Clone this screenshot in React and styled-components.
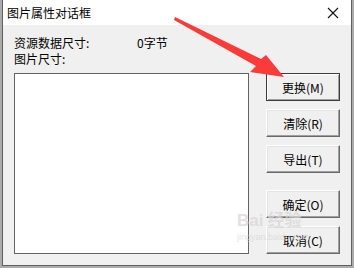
import styled, { createGlobalStyle } from 'styled-components';

const GlobalStyle = createGlobalStyle`
	html, body {
		margin: 0;
		padding: 0;
		background: #ababab;
	}
	* {
		box-sizing: border-box;
	}
`;

const buttons = [
	{ label: '更换(M)', primary: true },
	{ label: '清除(R)' },
	{ label: '导出(T)' },
];

const bottomButtons = [{ label: '确定(O)' }, { label: '取消(C)' }];

function App() {
	return (
		<>
			<GlobalStyle />
			<Screen>
				<Window>
					<TitleBar>
						<Title>图片属性对话框</Title>
						<CloseButton>
							<svg width="12" height="12" viewBox="0 0 12 12">
								<path d="M1 1 L11 11 M11 1 L1 11" stroke="#111" strokeWidth="1.1" />
							</svg>
						</CloseButton>
					</TitleBar>
					<Body>
						<InfoRow>
							<Label>资源数据尺寸:</Label>
							<Value>0字节</Value>
						</InfoRow>
						<InfoRow>
							<Label>图片尺寸:</Label>
						</InfoRow>
						<Content>
							<ListBox />
							<ButtonColumn>
								<ButtonGroup>
									{buttons.map((b) => (
										<Button key={b.label} primary={b.primary}>
											{b.label}
										</Button>
									))}
								</ButtonGroup>
								<ButtonGroup>
									{bottomButtons.map((b) => (
										<Button key={b.label}>{b.label}</Button>
									))}
								</ButtonGroup>
							</ButtonColumn>
						</Content>
					</Body>
				</Window>
				<Arrow width="354" height="268" viewBox="0 0 354 268">
					<polygon
						points="175,17 261,59 266,55 284,77 250,72 256,66 174,20"
						fill="#fb3a3a"
					/>
				</Arrow>
				<Watermark>
					<span>Bai</span>
					<span>经验</span>
					<small>jingyan.baidu.com</small>
				</Watermark>
			</Screen>
		</>
	);
}

export default App;

const Screen = styled.div`
	position: relative;
	width: 354px;
	height: 268px;
	overflow: hidden;
	background: #ababab;
	font-family: 'Noto Sans CJK SC', 'Liberation Sans', sans-serif;
`;

const Window = styled.div`
	margin-left: 2px;
	width: 350px;
	height: 266px;
	background: #f0f0f0;
	border: 1px solid #5f5f5f;
	border-top: none;
	display: flex;
	flex-direction: column;
`;

const TitleBar = styled.div`
	height: 25px;
	background: #ffffff;
	display: flex;
	align-items: center;
	justify-content: space-between;
	padding: 0 12px 0 4px;
`;

const Title = styled.div`
	font-size: 12px;
	color: #000;
	line-height: 1;
`;

const CloseButton = styled.div`
	display: flex;
	align-items: center;
`;

const Body = styled.div`
	padding: 9px 0 0 11px;
	display: flex;
	flex-direction: column;
`;

const InfoRow = styled.div`
	display: flex;
	height: 16px;
	align-items: center;
	font-size: 12px;
	color: #000;
`;

const Label = styled.span`
	width: 123px;
`;

const Value = styled.span``;

const Content = styled.div`
	display: flex;
	margin-top: 7px;
	gap: 17px;
`;

const ListBox = styled.div`
	width: 235px;
	height: 181px;
	background: #ffffff;
	border: 1px solid #646464;
`;

const ButtonColumn = styled.div`
	display: flex;
	flex-direction: column;
	gap: 17px;
`;

const ButtonGroup = styled.div`
	display: flex;
	flex-direction: column;
	gap: 8px;
`;

const Button = styled.div`
	width: 74px;
	height: 28px;
	display: flex;
	align-items: center;
	justify-content: center;
	font-size: 12px;
	color: #000;
	background: #f0f0f0;
	border: 1px solid;
	border-color: ${(p) => (p.primary ? '#3c3c3c' : '#ffffff #696969 #696969 #ffffff')};
	box-shadow: ${(p) =>
		p.primary
			? 'inset 1px 1px 0 #ffffff, inset -1px -1px 0 #a0a0a0'
			: 'inset -1px -1px 0 #a0a0a0, inset 1px 1px 0 #e3e3e3'};
`;

const Arrow = styled.svg`
	position: absolute;
	left: 0;
	top: 0;
	pointer-events: none;
`;

const Watermark = styled.div`
	position: absolute;
	left: 237px;
	top: 212px;
	width: 92px;
	display: flex;
	flex-wrap: wrap;
	align-items: baseline;
	gap: 4px;
	color: rgba(215, 215, 215, 0.75);
	font-family: 'Liberation Sans', 'Noto Sans CJK SC', sans-serif;
	font-size: 17px;
	font-weight: bold;
	line-height: 1;
	pointer-events: none;
	small {
		font-size: 9px;
		font-weight: normal;
		width: 100%;
	}
`;
